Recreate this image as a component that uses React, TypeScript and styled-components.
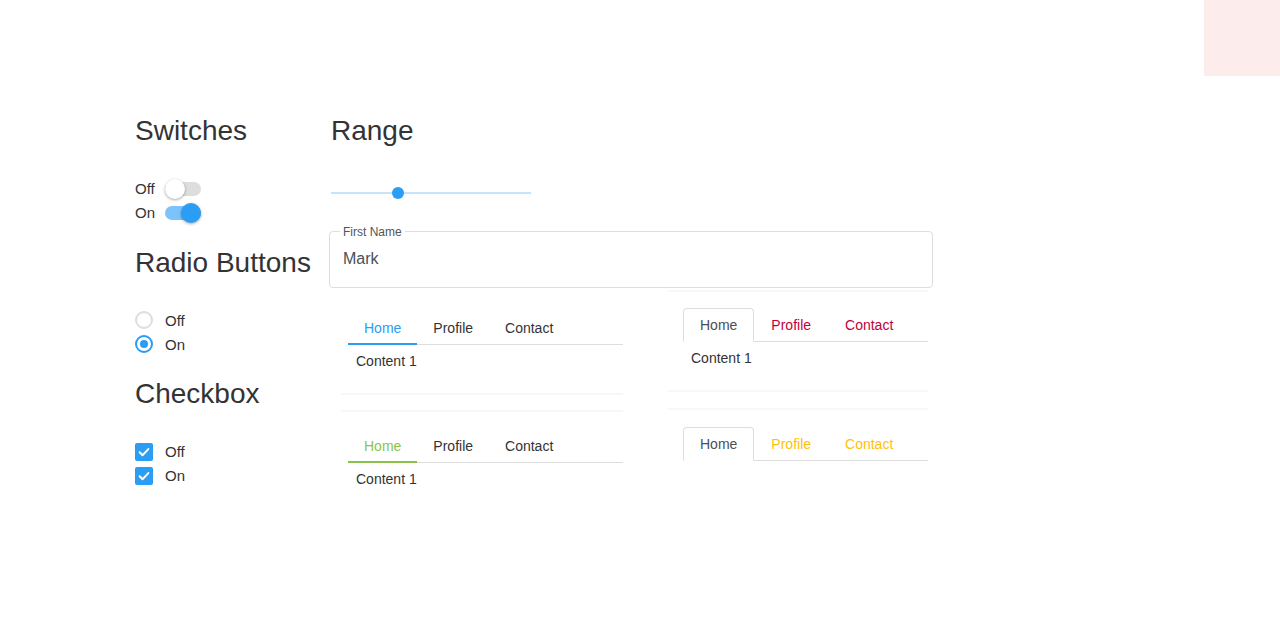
import React from "react";
import styled, { createGlobalStyle, css } from "styled-components";

const GlobalStyle = createGlobalStyle`
  html, body {
    margin: 0;
    padding: 0;
    background: #ffffff;
    font-family: "Liberation Sans", Arial, sans-serif;
    color: #333333;
  }
  * { box-sizing: border-box; }
`;

const BLUE = "#2a9df4";

const Page = styled.div`
  position: relative;
  width: 1280px;
  height: 640px;
  overflow: hidden;
`;

const Corner = styled.div`
  position: absolute;
  top: 0;
  right: 0;
  width: 76px;
  height: 76px;
  background: #fdecec;
`;

const Layout = styled.div`
  display: flex;
  padding: 114px 0 0 135px;
`;

const LeftColumn = styled.div`
  width: 194px;
  display: flex;
  flex-direction: column;
  gap: 21px;
`;

const RightColumn = styled.div`
  width: 604px;
  display: flex;
  flex-direction: column;
`;

const Section = styled.section`
  display: flex;
  flex-direction: column;
`;

const Heading = styled.h3<{ $space?: number; $indent?: number }>`
  margin: 0 0 ${(p) => p.$space ?? 29}px ${(p) => p.$indent ?? 0}px;
  font-size: 28px;
  font-weight: 400;
  line-height: 1.2;
  color: #333333;
  white-space: nowrap;
`;

const Row = styled.label<{ $gap: number }>`
  display: flex;
  align-items: center;
  gap: ${(p) => p.$gap}px;
  height: 24px;
  font-size: 15px;
  color: #333333;
`;

const SwitchTrack = styled.span<{ $on: boolean }>`
  position: relative;
  display: inline-block;
  width: 36px;
  height: 14px;
  border-radius: 7px;
  background: ${(p) => (p.$on ? "#7dc3fb" : "#dddddd")};
`;

const SwitchThumb = styled.span<{ $on: boolean }>`
  position: absolute;
  top: -3px;
  left: ${(p) => (p.$on ? "16px" : "0")};
  width: 20px;
  height: 20px;
  border-radius: 50%;
  background: ${(p) => (p.$on ? BLUE : "#ffffff")};
  box-shadow: 0 1px 3px rgba(0, 0, 0, 0.35);
`;

const Radio = styled.span<{ $on: boolean }>`
  display: inline-flex;
  align-items: center;
  justify-content: center;
  width: 18px;
  height: 18px;
  border-radius: 50%;
  border: 2px solid ${(p) => (p.$on ? BLUE : "#dddddd")};
  background: #ffffff;

  &::after {
    content: "";
    display: ${(p) => (p.$on ? "block" : "none")};
    width: 8px;
    height: 8px;
    border-radius: 50%;
    background: ${BLUE};
  }
`;

const Check = styled.span`
  display: inline-flex;
  align-items: center;
  justify-content: center;
  width: 18px;
  height: 18px;
  border-radius: 2px;
  background: ${BLUE};
`;

const SliderWrap = styled.div`
  position: relative;
  width: 200px;
  height: 20px;
  margin-left: 2px;
  display: flex;
  align-items: center;
`;

const SliderTrack = styled.div`
  width: 100%;
  height: 2px;
  background: #c5e3fb;
`;

const SliderThumb = styled.span`
  position: absolute;
  top: 4px;
  width: 12px;
  height: 12px;
  margin-left: -6px;
  border-radius: 50%;
  background: ${BLUE};
`;

const Field = styled.fieldset`
  margin: 22px 0 0;
  padding: 0 10px 8px;
  border: 1px solid #dddddd;
  border-radius: 4px;
`;

const Legend = styled.legend`
  padding: 0 3px;
  font-size: 12px;
  line-height: 14px;
  color: #555555;
`;

const Input = styled.input`
  display: block;
  width: 100%;
  height: 40px;
  padding: 0 3px;
  border: none;
  outline: none;
  background: transparent;
  font-family: "Liberation Sans", Arial, sans-serif;
  font-size: 16px;
  color: #495057;
`;

const TabGrid = styled.div`
  display: grid;
  grid-template-columns: 282px 260px;
  column-gap: 45px;
  row-gap: 13px;
  margin: 2px 0 0 12px;
  align-items: start;
`;

type Rules = "top" | "bottom" | "both";
const RULE = "2px solid #f6f7f9";

const Panel = styled.div<{ $variant: "line" | "box"; $rules: Rules }>`
  border-top: ${(p) => (p.$rules === "bottom" ? "2px solid transparent" : RULE)};
  border-bottom: ${(p) => (p.$rules === "top" ? "2px solid transparent" : RULE)};
  ${(p) =>
    p.$variant === "line"
      ? css`
          margin-top: 2px;
          padding: 18px 0 16px 7px;
        `
      : css`
          padding: ${p.$rules === "top" ? 17 : 16}px 0 16px 15px;
        `}
`;

const TabList = styled.div`
  display: flex;
  border-bottom: 1px solid #dddddd;
`;

const LineTab = styled.span<{ $active: boolean; $accent: string }>`
  padding: 1px 16px 0;
  line-height: 30px;
  font-size: 14px;
  margin-bottom: -1px;
  border-bottom: 2px solid ${(p) => (p.$active ? p.$accent : "transparent")};
  color: ${(p) => (p.$active ? p.$accent : "#333333")};
`;

const BoxTab = styled.span<{ $active: boolean; $color: string }>`
  padding: 0 16px;
  line-height: 32px;
  font-size: 14px;
  margin-bottom: -1px;
  border: 1px solid transparent;
  border-radius: 4px 4px 0 0;
  color: ${(p) => p.$color};

  ${(p) =>
    p.$active &&
    css`
      border-color: #dddddd #dddddd #ffffff;
      background: #ffffff;
      color: #495057;
    `}
`;

const TabContent = styled.div`
  padding: 8px 8px;
  font-size: 14px;
  line-height: 16px;
  color: #333333;
`;

const TABS = ["Home", "Profile", "Contact"];

function CheckMark() {
  return (
    <svg width="14" height="14" viewBox="0 0 24 24" fill="none">
      <path d="M4.5 12.5l5 5L19.5 7" stroke="#ffffff" strokeWidth="3.4" strokeLinecap="round" strokeLinejoin="round" />
    </svg>
  );
}

function LineTabs({ accent, rules, content }: { accent: string; rules: Rules; content?: string }) {
  return (
    <Panel $variant="line" $rules={rules}>
      <TabList>
        {TABS.map((t, i) => (
          <LineTab key={t} $active={i === 0} $accent={accent}>
            {t}
          </LineTab>
        ))}
      </TabList>
      {content && <TabContent>{content}</TabContent>}
    </Panel>
  );
}

function BoxTabs({ color, rules, content }: { color: string; rules: Rules; content?: string }) {
  return (
    <Panel $variant="box" $rules={rules}>
      <TabList>
        {TABS.map((t, i) => (
          <BoxTab key={t} $active={i === 0} $color={color}>
            {t}
          </BoxTab>
        ))}
      </TabList>
      {content && <TabContent>{content}</TabContent>}
    </Panel>
  );
}

export default function App() {
  const range = 33.5;
  return (
    <Page>
      <GlobalStyle />
      <Corner />
      <Layout>
        <LeftColumn>
          <Section>
            <Heading>Switches</Heading>
            <Row $gap={10}>
              Off
              <SwitchTrack $on={false}>
                <SwitchThumb $on={false} />
              </SwitchTrack>
            </Row>
            <Row $gap={10}>
              On
              <SwitchTrack $on>
                <SwitchThumb $on />
              </SwitchTrack>
            </Row>
          </Section>
          <Section>
            <Heading>Radio Buttons</Heading>
            <Row $gap={12}>
              <Radio $on={false} />
              Off
            </Row>
            <Row $gap={12}>
              <Radio $on />
              On
            </Row>
          </Section>
          <Section>
            <Heading>Checkbox</Heading>
            <Row $gap={12}>
              <Check>
                <CheckMark />
              </Check>
              Off
            </Row>
            <Row $gap={12}>
              <Check>
                <CheckMark />
              </Check>
              On
            </Row>
          </Section>
        </LeftColumn>
        <RightColumn>
          <Heading $space={35} $indent={2}>
            Range
          </Heading>
          <SliderWrap>
            <SliderTrack />
            <SliderThumb style={{ left: `${range}%` }} />
          </SliderWrap>
          <Field>
            <Legend>First Name</Legend>
            <Input defaultValue="Mark" />
          </Field>
          <TabGrid>
            <LineTabs accent={BLUE} rules="bottom" content="Content 1" />
            <BoxTabs color="#c4003a" rules="both" content="Content 1" />
            <LineTabs accent="#8bc34a" rules="top" content="Content 1" />
            <BoxTabs color="#ffc107" rules="top" />
          </TabGrid>
        </RightColumn>
      </Layout>
    </Page>
  );
}
